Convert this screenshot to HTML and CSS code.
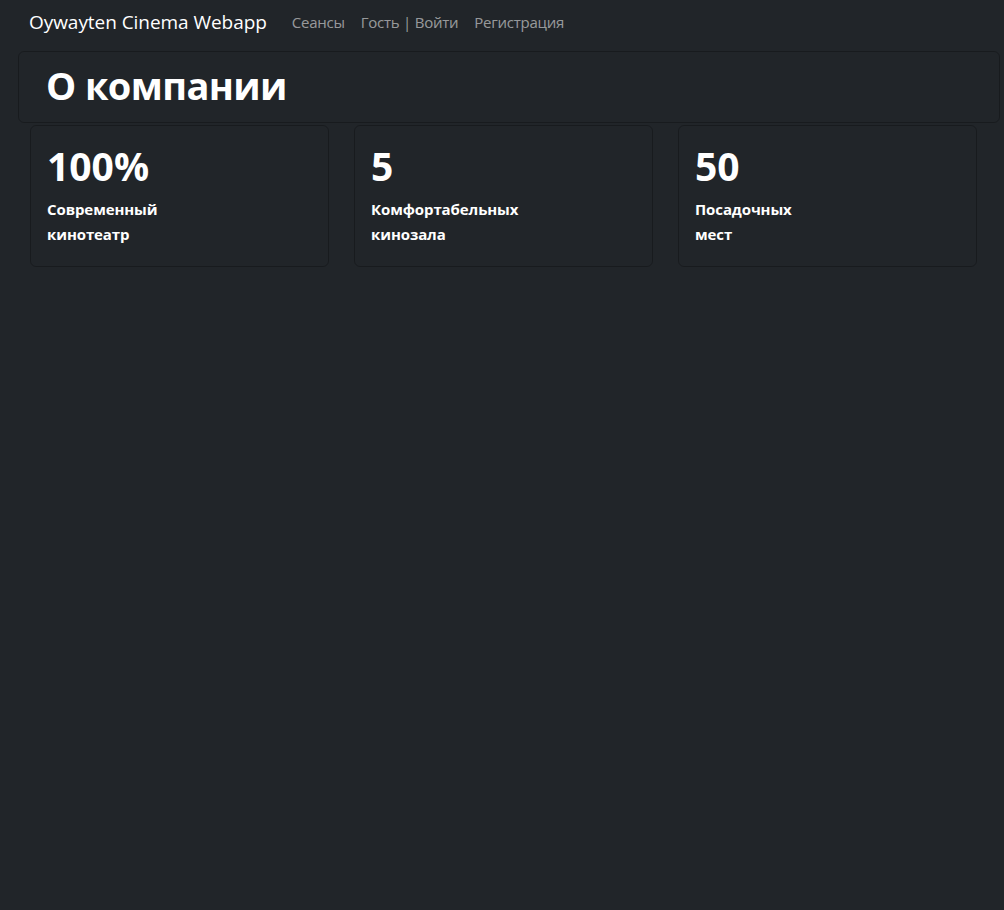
FILE: index.html
```html
<!DOCTYPE html>
<html lang="ru">
<head>
<meta charset="utf-8">
<title>О компании</title>
<link rel="stylesheet" href="styles.css">
</head>
<body>
<nav class="navbar">
  <a class="brand" href="#">Oywayten Cinema Webapp</a>
  <ul class="nav">
    <li><a href="#">Сеансы</a></li>
    <li><a href="#">Гость | Войти</a></li>
    <li><a href="#">Регистрация</a></li>
  </ul>
</nav>
<header class="hero">
  <h1>О компании</h1>
</header>
<section class="stats">
  <div class="card">
    <div class="num">100%</div>
    <p class="label">Современный<br>кинотеатр</p>
  </div>
  <div class="card">
    <div class="num">5</div>
    <p class="label">Комфортабельных<br>кинозала</p>
  </div>
  <div class="card">
    <div class="num">50</div>
    <p class="label">Посадочных<br>мест</p>
  </div>
</section>
</body>
</html>
```
FILE: styles.css
```css
html, body {
  margin: 0;
  padding: 0;
  background: #212529;
  color: #fff;
  font-family: "Open Sans", "Noto Sans", sans-serif;
  overflow: hidden;
}
a { text-decoration: none; }

.navbar {
  display: flex;
  align-items: center;
  height: 44px;
  padding: 0 0 0 29px;
}
.brand {
  color: #fff;
  font-size: 19px;
  margin-right: 17px;
  letter-spacing: -0.05px;
}
.nav {
  display: flex;
  list-style: none;
  margin: 0;
  padding: 0;
}
.nav a {
  display: block;
  padding: 0 8px;
  color: rgba(255,255,255,0.55);
  font-size: 15px;
  letter-spacing: -0.25px;
}

.hero {
  margin: 7px 0 0 18px;
  width: 982px;
  height: 72px;
  box-sizing: border-box;
  border: 1px solid rgba(0,0,0,0.25);
  border-radius: 6px;
  display: flex;
  align-items: center;
  padding: 0 0 5px 27px;
}
.hero h1 {
  margin: 0;
  font-size: 38px;
  font-weight: 700;
  letter-spacing: -0.6px;
  line-height: 1;
}

.stats {
  display: flex;
  gap: 25px;
  margin: 2px 0 0 30px;
}
.card {
  width: 299px;
  height: 142px;
  box-sizing: border-box;
  border: 1px solid rgba(0,0,0,0.25);
  border-radius: 6px;
  padding: 16px 16px;
}
.num {
  font-size: 39px;
  font-weight: 700;
  line-height: 48px;
  letter-spacing: 0;
}
.label {
  margin: 7px 0 0;
  font-size: 15px;
  font-weight: 700;
  line-height: 25px;
  letter-spacing: -0.1px;
}
```
